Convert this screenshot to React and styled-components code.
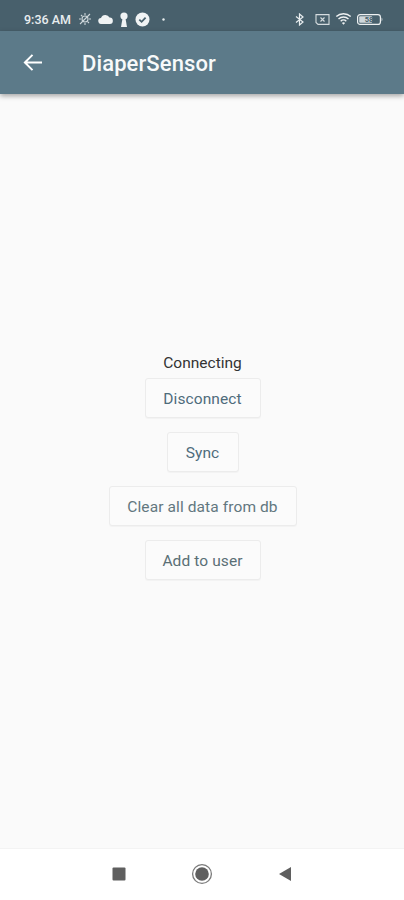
import React from 'react';
import styled, { createGlobalStyle } from 'styled-components';

const Global = createGlobalStyle`
  html, body { margin: 0; padding: 0; background: #fafafa; }
  * { box-sizing: border-box; }
`;

const Screen = styled.div`
  width: 404px; height: 900px; display: flex; flex-direction: column;
  font-family: Roboto, "Liberation Sans", sans-serif; background: #fafafa; overflow: hidden;
`;
const StatusBar = styled.div`
  height: 31px; flex: none; background: #48606c; color: #e8edef;
  display: flex; align-items: center; justify-content: space-between; padding: 7px 21px 0 24px;
  font-size: 12.5px; font-weight: 500;
`;
const StatusGroup = styled.div`
  display: flex; align-items: center; gap: ${p => p.$gap || 6}px;
`;
const Time = styled.span`
  margin-right: 1px;
`;
const AppBar = styled.header`
  height: 63px; flex: none; background: #5c7a89; color: #fff;
  display: flex; align-items: center; padding: 0 0 0 23px; gap: 40px;
  box-shadow: 0 2px 5px rgba(0,0,0,.35); position: relative;
`;
const Title = styled.h1`
  margin: 2px 0 0; font-size: 22px; font-weight: 500; line-height: 1; color: #f7f9fa; letter-spacing: .1px;
`;
const Content = styled.main`
  flex: 1; display: flex; flex-direction: column; align-items: center; justify-content: center;
  padding: 0 0 8px 1px;
`;
const Label = styled.div`
  font-size: 15.5px; line-height: 17px; color: #333; margin-bottom: 6px;
`;
const ActionButton = styled.button`
  height: 40px; width: ${p => p.$w}px; margin-bottom: 14px; padding: 2px 0 0;
  background: #fbfbfb; border: 1px solid #ececec; border-radius: 3px;
  font-family: inherit; font-size: 15.5px; font-weight: 400; color: ${p => p.$color || '#566f7c'};
  letter-spacing: .1px;
  box-shadow: 0 1px 1px rgba(0,0,0,.03);
  &:last-child { margin-bottom: 0; }
`;
const NavBar = styled.nav`
  height: 52px; flex: none; background: #fff; border-top: 1px solid #f3f3f3;
  display: flex; align-items: center; justify-content: center; gap: 65px; padding-bottom: 2px;
`;
const BtWrap = styled.span`
  display: flex; margin-right: 6px;
`;

const Arrow = () => (
  <svg width="19" height="19" viewBox="0 0 20 20" fill="none" stroke="#fff" strokeWidth="2.1">
    <path d="M20 10H2M10 2l-8 8 8 8" />
  </svg>
);
const Sun = () => (
  <svg width="14" height="14" viewBox="0 0 14 14" fill="none" stroke="#cdd6da" strokeWidth="1.1">
    <circle cx="7" cy="7" r="3" />
    <path d="M7 1v2M7 11v2M1 7h2M11 7h2M3 3l1.4 1.4M9.6 9.6 11 11M3 11l1.4-1.4M9.6 4.4 11 3M2 12 12 2" />
  </svg>
);
const Cloud = () => (
  <svg width="15" height="10" viewBox="0 0 15 10" fill="#f0f3f4">
    <path d="M3.5 10a3 3 0 0 1-.5-6A4.6 4.6 0 0 1 11.5 3.6 3.2 3.2 0 0 1 11.8 10z" />
  </svg>
);
const Keyhole = () => (
  <svg width="10" height="15" viewBox="0 0 10 15" fill="#f0f3f4">
    <circle cx="5" cy="4" r="3.6" />
    <path d="M3.6 6h2.8l1.6 9H2z" />
  </svg>
);
const Check = () => (
  <svg width="15" height="15" viewBox="0 0 15 15">
    <circle cx="7.5" cy="7.5" r="7" fill="#f0f3f4" />
    <path d="M4.3 7.6l2.3 2.2 4-4.2" fill="none" stroke="#48606c" strokeWidth="1.8" />
  </svg>
);
const Dot = () => (
  <svg width="3" height="3" viewBox="0 0 3 3" style={{ marginLeft: 6 }}>
    <circle cx="1.5" cy="1.5" r="1.2" fill="#e8edef" />
  </svg>
);
const Bluetooth = () => (
  <svg width="9" height="13" viewBox="0 0 9 13" fill="none" stroke="#e8edef" strokeWidth="1.2">
    <path d="M1 3.5l7 5.5-3.5 3V1L8 4 1 9.5" />
  </svg>
);
const SimBox = () => (
  <svg width="15" height="11" viewBox="0 0 15 11" fill="none" stroke="#d5dcdf" strokeWidth="1.1">
    <path d="M1 .6h13v9.8H3L1 8.5z" />
    <path d="M5.5 3.5l4 4M9.5 3.5l-4 4" />
  </svg>
);
const Wifi = () => (
  <svg width="17" height="12" viewBox="0 0 16 12" fill="none" stroke="#eef1f2" strokeWidth="1.4">
    <path d="M.8 3.6a10.4 10.4 0 0 1 14.4 0M3 6a7.2 7.2 0 0 1 10 0M5.2 8.2a4 4 0 0 1 5.6 0" />
    <path d="M8 11.8 6.4 9.9a2.4 2.4 0 0 1 3.2 0z" fill="#eef1f2" stroke="none" />
  </svg>
);
const Battery = () => (
  <svg width="26" height="11" viewBox="0 0 26 11">
    <rect x=".6" y=".6" width="22.8" height="9.8" rx="2.5" fill="none" stroke="#eef1f2" strokeWidth="1.2" />
    <rect x="2.2" y="2.2" width="13" height="6.6" rx="1" fill="#cfd8dc" />
    <path d="M24.6 3.6c1 .4 1 3.4 0 3.8z" fill="#eef1f2" />
    <text x="12" y="8.4" fontSize="7.5" fontWeight="700" textAnchor="middle" fill="#48606c" fontFamily="Roboto, sans-serif">58</text>
  </svg>
);
const NavStop = () => (
  <svg width="14" height="14" viewBox="0 0 14 14"><rect x=".5" y=".5" width="13" height="13" rx="1" fill="#5f5f5f" /></svg>
);
const NavHome = () => (
  <svg width="22" height="22" viewBox="0 0 22 22">
    <circle cx="11" cy="11" r="9.4" fill="none" stroke="#7a7a7a" strokeWidth="1.3" />
    <circle cx="11" cy="11" r="6.8" fill="#5f5f5f" />
  </svg>
);
const NavBack = () => (
  <svg width="14" height="16" viewBox="0 0 14 16"><path d="M13 1v14L1 8z" fill="#5f5f5f" /></svg>
);

export default function App() {
  return (
    <Screen>
      <Global />
      <StatusBar>
        <StatusGroup>
          <Time>9:36 AM</Time>
          <Sun /><Cloud /><Keyhole /><Check /><Dot />
        </StatusGroup>
        <StatusGroup $gap={5}>
          <BtWrap><Bluetooth /></BtWrap><SimBox /><Wifi /><Battery />
        </StatusGroup>
      </StatusBar>
      <AppBar>
        <Arrow />
        <Title>DiaperSensor</Title>
      </AppBar>
      <Content>
        <Label>Connecting</Label>
        <ActionButton $w={116} $color="#4f6c7b">Disconnect</ActionButton>
        <ActionButton $w={72} $color="#4f6c7b">Sync</ActionButton>
        <ActionButton $w={188} $color="#62777f">Clear all data from db</ActionButton>
        <ActionButton $w={116} $color="#5a6f75">Add to user</ActionButton>
      </Content>
      <NavBar>
        <NavStop /><NavHome /><NavBack />
      </NavBar>
    </Screen>
  );
}
